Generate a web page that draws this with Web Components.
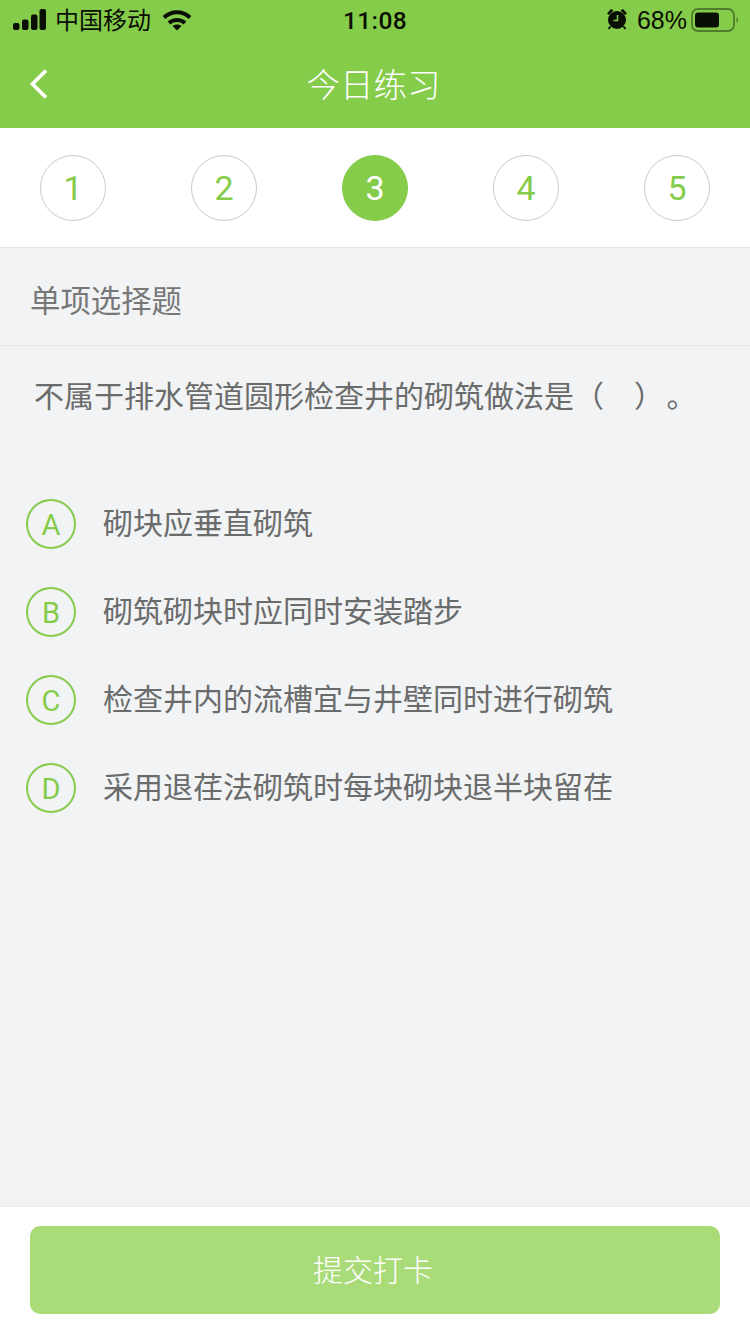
<!DOCTYPE html>
<html lang="zh-CN">
<head>
<meta charset="utf-8">
<title>今日练习</title>
<style>
  html, body { margin: 0; height: 100%; }
  body {
    display: flex;
    flex-direction: column;
    height: 1334px;
    background: #f1f3f5;
    font-family: "Liberation Sans", "Noto Sans CJK SC", sans-serif;
    overflow: hidden;
  }
  quiz-body { flex: 1; }
</style>
</head>
<body>
<app-header title="今日练习"></app-header>
<step-bar current="3" total="5"></step-bar>
<quiz-body kind="单项选择题" question="不属于排水管道圆形检查井的砌筑做法是（ &nbsp; ）&#8202;。">
  <quiz-option letter="A">砌块应垂直砌筑</quiz-option>
  <quiz-option letter="B">砌筑砌块时应同时安装踏步</quiz-option>
  <quiz-option letter="C">检查井内的流槽宜与井壁同时进行砌筑</quiz-option>
  <quiz-option letter="D">采用退荏法砌筑时每块砌块退半块留荏</quiz-option>
</quiz-body>
<submit-bar>提交打卡</submit-bar>

<script>
const CJK = '"Liberation Sans", "Noto Sans CJK SC", sans-serif'
const NUM = 'Roboto, "Liberation Sans", sans-serif'

class AppHeader extends HTMLElement {
  connectedCallback() {
    const title = this.getAttribute('title') || ''
    this.removeAttribute('title')
    this.attachShadow({ mode: 'open' }).innerHTML = `
      <style>
        :host { display: block; background: #86cc4b; height: 128px; font-family: ${CJK}; }
        .status {
          height: 40px;
          display: grid;
          grid-template-columns: 1fr auto 1fr;
          align-items: center;
          color: #0a0f05;
        }
        .left { display: flex; align-items: center; padding-left: 13px; }
        .carrier { margin-left: 9px; padding-bottom: 4px; font-size: 24px; }
        .wifi { margin-left: 11px; }
        .time { font-family: ${NUM}; font-size: 24.5px; font-weight: 500; letter-spacing: .4px; }
        .right { display: flex; align-items: center; justify-content: flex-end; padding-right: 11px; }
        .alarm { margin-bottom: 2px; }
        .pct { margin: 0 4px 0 9px; font-size: 25px; }
        svg { display: block; }
        .nav { height: 88px; position: relative; display: flex; align-items: center; justify-content: center; }
        .back { position: absolute; left: 29px; top: 28px; }
        h1 { margin: 0; padding: 0 3px 4px 0; font-weight: 300; font-size: 33.5px; color: #fff; }
      </style>
      <div class="status">
        <div class="left">
          <svg width="33" height="22" viewBox="0 0 33 22" fill="#0a0f05">
            <rect x="0" y="14" width="6.500" height="7" rx="2"/>
            <rect x="9" y="10.500" width="6.500" height="10.500" rx="2"/>
            <rect x="18" y="5.500" width="6.500" height="15.500" rx="2"/>
            <rect x="26.500" y="0" width="6.500" height="21" rx="2"/>
          </svg>
          <span class="carrier">中国移动</span>
          <svg class="wifi" width="30" height="22" viewBox="0 0 30 22" fill="none" stroke="#0a0f05" stroke-width="4">
            <path d="M2 8.500C9.500 1.500 20.500 1.500 28 8.500"/>
            <path d="M7 14C11.500 10 18.500 10 23 14"/>
            <path d="M15 21.500 10.500 17C13 15 17 15 19.500 17z" fill="#0a0f05" stroke="none"/>
          </svg>
        </div>
        <div class="time">11:08</div>
        <div class="right">
          <svg class="alarm" width="22" height="22" viewBox="0 0 22 22" fill="#0a0f05">
            <circle cx="11" cy="12" r="9"/>
            <path d="M1 5.500 5 1l2.500 1.500-4.500 4.500zM21 5.500 17 1l-2.500 1.500 4.500 4.500z"/>
            <path d="M4.500 18.500 2.500 21M17.500 18.500l2 2.500" stroke="#0a0f05" stroke-width="2"/>
            <path d="M11.500 7v5.500H7.500" stroke="#86cc4b" stroke-width="1.500" fill="none"/>
          </svg>
          <span class="pct">68%</span>
          <svg width="48" height="24" viewBox="0 0 48 24">
            <rect x="1" y="1" width="42" height="22" rx="6" fill="none" stroke="#4f7d2c" stroke-width="1.800"/>
            <rect x="4" y="4.500" width="24" height="15" rx="3" fill="#0a0f05"/>
            <path d="M45.500 9c1 .6 1.500 1.700 1.500 3s-.5 2.400-1.500 3z" fill="#4f7d2c"/>
          </svg>
        </div>
      </div>
      <div class="nav">
        <svg class="back" width="20" height="32" viewBox="0 0 20 32" fill="none" stroke="#fff" stroke-width="3.600">
          <path d="M17 2.500 3.500 16 17 29.500"/>
        </svg>
        <h1>${title}</h1>
      </div>
    `
  }
}

class StepBar extends HTMLElement {
  connectedCallback() {
    const current = Number(this.getAttribute('current'))
    const total = Number(this.getAttribute('total'))
    let items = ''
    for (let i = 1; i <= total; i++) {
      items += `<div class="step${i === current ? ' on' : ''}">${i}</div>`
    }
    this.attachShadow({ mode: 'open' }).innerHTML = `
      <style>
        :host {
          display: flex;
          justify-content: space-between;
          align-items: center;
          box-sizing: border-box;
          height: 120px;
          padding: 0 40px;
          background: #fff;
          border-bottom: 1px solid #e4e6e8;
          font-family: ${NUM};
        }
        .step {
          box-sizing: border-box;
          width: 66px;
          height: 66px;
          border: 1px solid #c9cbc9;
          border-radius: 50%;
          display: flex;
          align-items: center;
          justify-content: center;
          color: #86cc4b;
          font-size: 34px;
        }
        .on { background: #86cc4b; border-color: #86cc4b; color: #fff; }
      </style>
      ${items}
    `
  }
}

class QuizBody extends HTMLElement {
  connectedCallback() {
    this.attachShadow({ mode: 'open' }).innerHTML = `
      <style>
        :host { display: block; color: #6a6b6b; font-family: ${CJK}; text-spacing-trim: space-all; }
        .kind {
          box-sizing: border-box;
          height: 98px;
          padding: 4px 0 0 30px;
          display: flex;
          align-items: center;
          border-bottom: 1px solid #e4e6e8;
          font-size: 30.4px;
          color: #777;
        }
        .question { margin: 0; padding: 29px 0 0 34px; font-size: 30px; line-height: 44px; height: 80px; white-space: pre; word-spacing: 1.7px; }
        .options { padding-top: 25px; display: flex; flex-direction: column; }
      </style>
      <div class="kind">${this.getAttribute('kind')}</div>
      <p class="question">${this.getAttribute('question')}</p>
      <div class="options"><slot></slot></div>
    `
  }
}

class QuizOption extends HTMLElement {
  connectedCallback() {
    this.attachShadow({ mode: 'open' }).innerHTML = `
      <style>
        :host {
          display: flex;
          align-items: center;
          height: 88px;
          padding-left: 26px;
          font-size: 30px;
          color: #6a6b6b;
          font-family: ${CJK};
        }
        .letter {
          box-sizing: border-box;
          width: 50px;
          height: 50px;
          padding-top: 1px;
          border: 2px solid #86cc4b;
          border-radius: 50%;
          display: flex;
          align-items: center;
          justify-content: center;
          color: #86cc4b;
          font-family: ${NUM};
          font-size: 29px;
          margin-right: 27px;
        }
        .text { padding-bottom: 6px; }
      </style>
      <div class="letter">${this.getAttribute('letter')}</div>
      <span class="text"><slot></slot></span>
    `
  }
}

class SubmitBar extends HTMLElement {
  connectedCallback() {
    this.attachShadow({ mode: 'open' }).innerHTML = `
      <style>
        :host {
          display: block;
          box-sizing: border-box;
          height: 128px;
          padding: 19px 30px 20px;
          background: #fff;
          border-top: 1px solid #e9ebee;
          font-family: ${CJK};
        }
        button {
          display: block;
          width: 100%;
          height: 88px;
          padding: 0 4px 4px 0;
          border: 0;
          border-radius: 10px;
          background: #a9dc79;
          color: #fff;
          font: inherit;
          font-size: 30px;
          font-weight: 300;
        }
      </style>
      <button><slot></slot></button>
    `
  }
}

customElements.define('app-header', AppHeader)
customElements.define('step-bar', StepBar)
customElements.define('quiz-body', QuizBody)
customElements.define('quiz-option', QuizOption)
customElements.define('submit-bar', SubmitBar)
</script>
</body>
</html>
